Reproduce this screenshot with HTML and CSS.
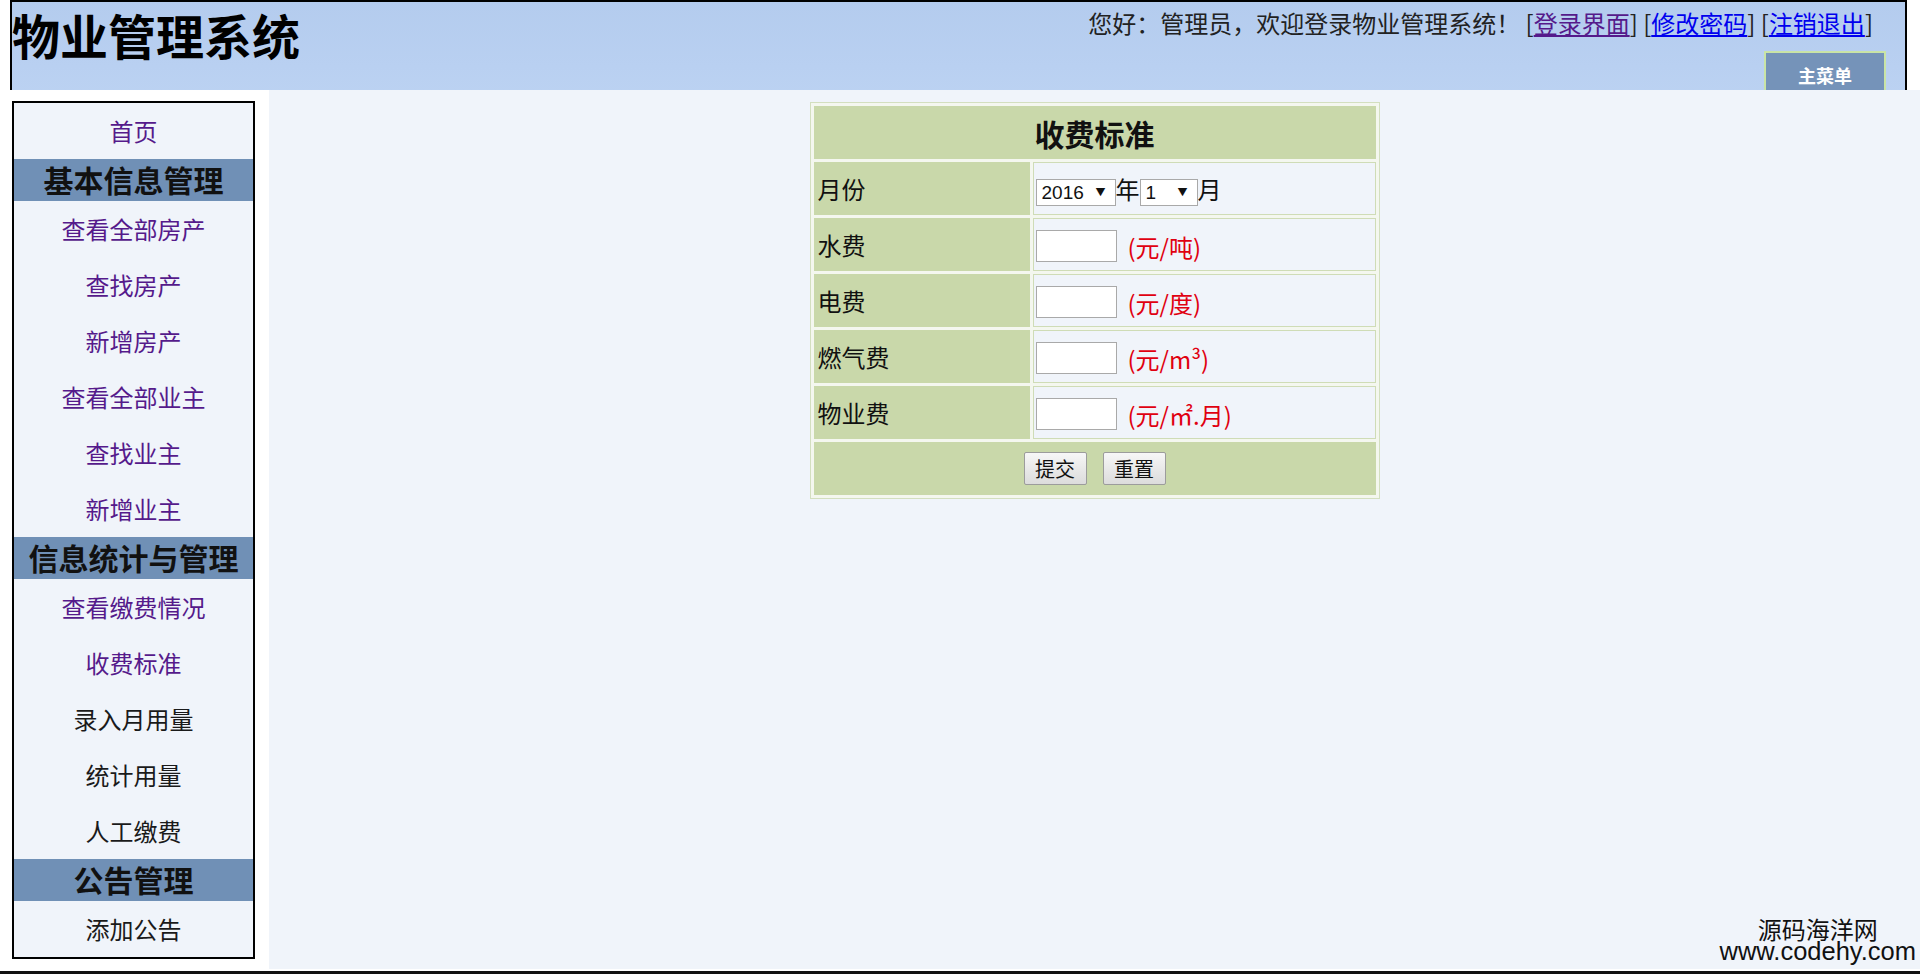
FILE: index.html
```html
<!DOCTYPE html>
<html lang="zh-CN">
<head>
<meta charset="utf-8">
<title>物业管理系统</title>
<link rel="stylesheet" href="styles.css">
</head>
<body>
<div class="page">
  <header class="top">
    <div class="banner">
      <h1 class="title">物业管理系统</h1>
      <div class="topright">
        <div class="welcome">您好：管理员，欢迎登录物业管理系统！ [<a class="lk visited" href="#">登录界面</a>] [<a class="lk" href="#">修改密码</a>] [<a class="lk" href="#">注销退出</a>]</div>
        <div class="menubtn">主菜单</div>
      </div>
    </div>
  </header>
  <div class="main">
    <aside class="leftframe">
      <nav class="sidebar">
        <a class="item v" href="#">首页</a>
        <div class="band">基本信息管理</div>
        <a class="item v" href="#">查看全部房产</a>
        <a class="item v" href="#">查找房产</a>
        <a class="item v" href="#">新增房产</a>
        <a class="item v" href="#">查看全部业主</a>
        <a class="item v" href="#">查找业主</a>
        <a class="item v" href="#">新增业主</a>
        <div class="band">信息统计与管理</div>
        <a class="item v" href="#">查看缴费情况</a>
        <a class="item v" href="#">收费标准</a>
        <a class="item" href="#">录入月用量</a>
        <a class="item" href="#">统计用量</a>
        <a class="item" href="#">人工缴费</a>
        <div class="band">公告管理</div>
        <a class="item" href="#">添加公告</a>
      </nav>
    </aside>
    <section class="content">
      <table class="fee">
        <tr><td class="head" colspan="2">收费标准</td></tr>
        <tr>
          <td class="lbl">月份</td>
          <td class="val"><span class="sel"><select class="s-year"><option>2016</option></select></span>年<span class="sel"><select class="s-month"><option>1</option></select></span>月</td>
        </tr>
        <tr>
          <td class="lbl">水费</td>
          <td class="val"><input class="inp" type="text"><span class="unit">(元/吨)</span></td>
        </tr>
        <tr>
          <td class="lbl">电费</td>
          <td class="val"><input class="inp" type="text"><span class="unit">(元/度)</span></td>
        </tr>
        <tr>
          <td class="lbl">燃气费</td>
          <td class="val"><input class="inp" type="text"><span class="unit">(元/m³)</span></td>
        </tr>
        <tr>
          <td class="lbl">物业费</td>
          <td class="val"><input class="inp" type="text"><span class="unit">(元/㎡.月)</span></td>
        </tr>
        <tr>
          <td class="btncell" colspan="2"><div class="btns"><button class="btn" type="button">提交</button><button class="btn" type="button">重置</button></div></td>
        </tr>
      </table>
    </section>
  </div>
  <div class="bottomline"></div>
  <div class="watermark"><div class="wm1">源码海洋网</div><div class="wm2">www.codehy.com</div></div>
</div>
</body>
</html>
```
FILE: styles.css
```css
html, body {
  margin: 0;
  padding: 0;
}
body {
  background: #fff;
  font-family: "Noto Sans CJK SC", "Liberation Sans", sans-serif;
  overflow: hidden;
}
.page {
  position: relative;
  height: 974px;
  display: flex;
  flex-direction: column;
}
.top {
  flex: none;
  height: 90px;
  overflow: hidden;
  padding: 0 13px 0 10px;
}
.banner {
  height: 130px;
  border: 2px solid #000;
  border-bottom: none;
  background: linear-gradient(180deg, #b4ccee 0%, #b9d0f1 50%, #bfd5f3 100%);
  display: flex;
  justify-content: space-between;
}
.title {
  margin: 8px 0 0 0;
  font-size: 48px;
  line-height: 48px;
  font-weight: bold;
  color: #000;
}
.topright {
  display: flex;
  flex-direction: column;
  align-items: flex-end;
  padding-right: 19px;
}
.welcome {
  margin: 9px 13px 0 0;
  font-size: 24px;
  line-height: 24px;
  color: #222;
  white-space: nowrap;
}
.lk {
  color: #0000ee;
  text-decoration: underline;
}
.lk.visited {
  color: #551a8b;
}
.menubtn {
  margin-top: 16px;
  width: 122px;
  height: 48px;
  box-sizing: border-box;
  border: 2px solid #c9e4a6;
  background: #7593b9;
  color: #fff;
  font-weight: bold;
  font-size: 18px;
  line-height: 44px;
  text-align: center;
}
.main {
  flex: 1;
  display: flex;
  min-height: 0;
}
.leftframe {
  flex: none;
  width: 269px;
  box-sizing: border-box;
  padding: 11px 0 0 12px;
  background: #fff;
}
.sidebar {
  width: 243px;
  box-sizing: border-box;
  border: 2px solid #000;
  background: #f0f4fa;
  display: flex;
  flex-direction: column;
}
.item {
  height: 56px;
  line-height: 56px;
  text-align: center;
  font-size: 24px;
  color: #1a1a1a;
  text-decoration: none;
}
.item.v {
  color: #551a8b;
}
.band {
  height: 42px;
  line-height: 41px;
  background: #7090b6;
  text-align: center;
  font-size: 30px;
  font-weight: bold;
  color: #111;
}
.content {
  flex: 1;
  margin-bottom: 2px;
  background: #f0f4fa;
  padding-top: 12px;
  display: flex;
  justify-content: center;
  align-items: flex-start;
}
.fee {
  width: 570px;
  border-collapse: separate;
  border-spacing: 3px;
  border: 1px solid #d3dfbf;
  background: #f4f7ef;
}
.fee td {
  height: 53px;
  box-sizing: border-box;
  padding: 0;
  border: 1px solid #cfdcb6;
  vertical-align: middle;
  font-size: 24px;
  color: #111;
}
.fee td.head {
  background: #c9d8aa;
  border-color: #c9d8aa;
  text-align: center;
  font-size: 30px;
  font-weight: bold;
}
.fee td.lbl {
  width: 216px;
  background: #c9d8aa;
  border-color: #c9d8aa;
  padding-left: 3px;
}
.fee td.val {
  background: #f0f4fa;
  padding-left: 2px;
}
.fee td.btncell {
  background: #c9d8aa;
  border-color: #c9d8aa;
}
.sel {
  position: relative;
  display: inline-block;
  vertical-align: middle;
}
.sel::after {
  content: "▼";
  position: absolute;
  right: 10px;
  top: 50%;
  transform: translateY(-50%);
  font-size: 10px;
  line-height: 10px;
  color: #111;
  pointer-events: none;
}
.sel select {
  -webkit-appearance: none;
  appearance: none;
  display: block;
  height: 27px;
  box-sizing: border-box;
  border: 1px solid #a9a9a9;
  border-radius: 0;
  background: #fff;
  font-family: "Liberation Sans", sans-serif;
  font-size: 19px;
  color: #111;
  padding: 0 0 0 5px;
  margin: 0;
}
.s-year {
  width: 80px;
}
.s-month {
  width: 58px;
}
.inp {
  width: 81px;
  height: 32px;
  box-sizing: border-box;
  border: 1px solid #a9a9a9;
  background: #fff;
  padding: 0;
  margin: 0;
  vertical-align: middle;
}
.unit {
  color: #e00010;
  margin-left: 11px;
  vertical-align: middle;
}
.btns {
  display: flex;
  justify-content: center;
  gap: 16px;
}
.btn {
  width: 63px;
  height: 33px;
  box-sizing: border-box;
  padding: 0;
  border: 1px solid #9c9c9c;
  border-radius: 2px;
  background: linear-gradient(180deg, #f7f7f7 0%, #e9e9e9 50%, #dcdcdc 100%);
  font-family: "Noto Sans CJK SC", sans-serif;
  font-size: 20px;
  line-height: 31px;
  color: #111;
}
.bottomline {
  flex: none;
  height: 3px;
  background: #111;
}
.watermark {
  position: absolute;
  right: 4px;
  bottom: 12px;
  text-align: center;
  color: #111;
  line-height: 22px;
}
.wm1 {
  font-size: 24px;
}
.wm2 {
  font-family: "Liberation Sans", sans-serif;
  font-size: 25.5px;
}
```
